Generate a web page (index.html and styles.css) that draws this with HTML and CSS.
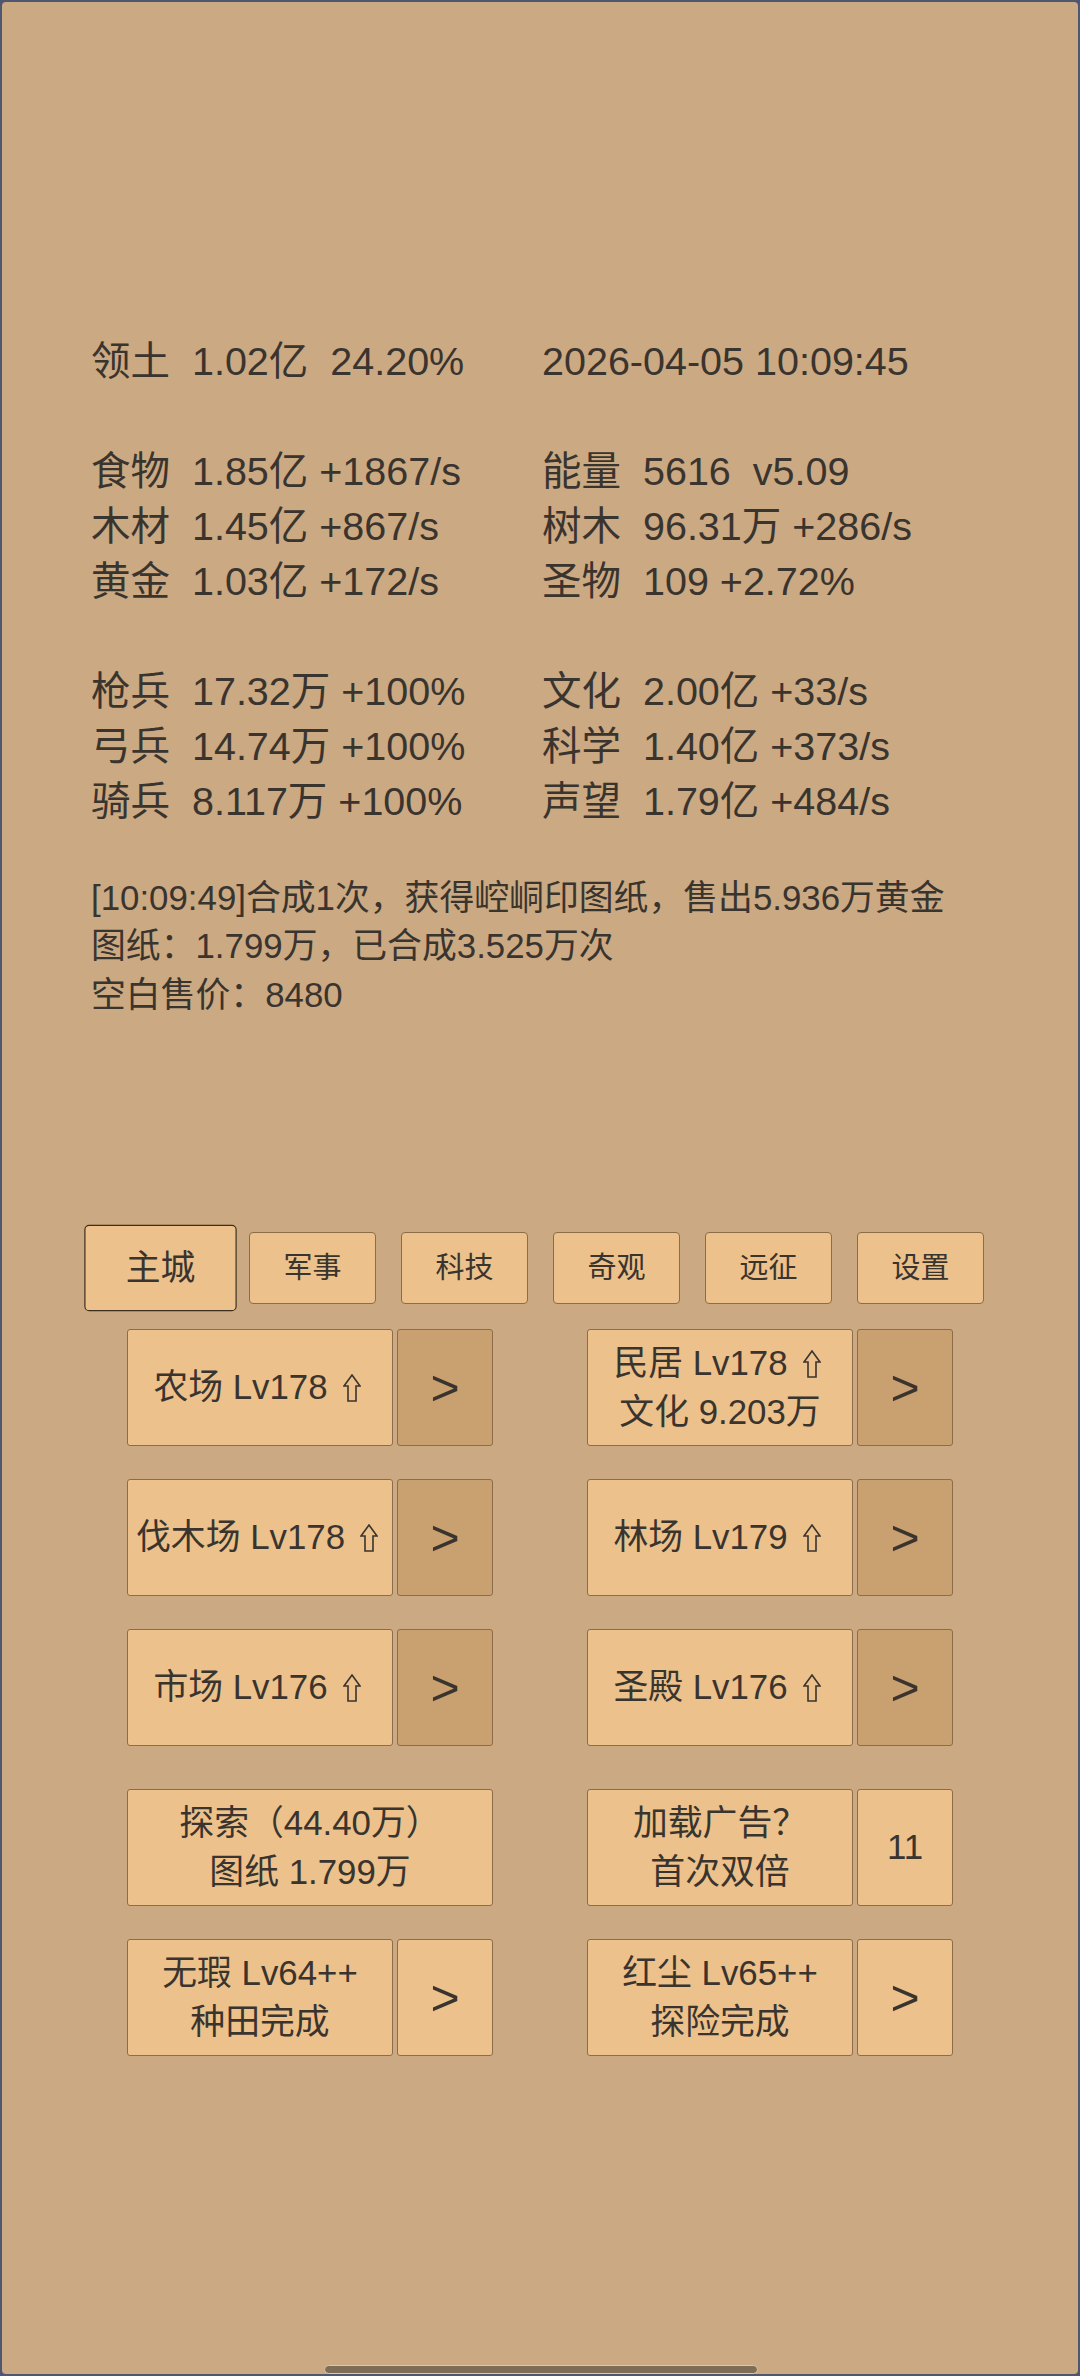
FILE: index.html
```html
<!DOCTYPE html>
<html lang="zh-CN">
<head>
<meta charset="utf-8">
<title>主城</title>
<link rel="stylesheet" href="styles.css">
</head>
<body>
<div class="screen">
  <section class="stats">
    <div class="group">
      <div class="cell">领土  1.02亿  24.20%</div>
      <div class="cell">2026-04-05 10:09:45</div>
    </div>
    <div class="group">
      <div class="cell">食物  1.85亿 +1867/s</div>
      <div class="cell">能量  5616  v5.09</div>
      <div class="cell">木材  1.45亿 +867/s</div>
      <div class="cell">树木  96.31万 +286/s</div>
      <div class="cell">黄金  1.03亿 +172/s</div>
      <div class="cell">圣物  109 +2.72%</div>
    </div>
    <div class="group">
      <div class="cell">枪兵  17.32万 +100%</div>
      <div class="cell">文化  2.00亿 +33/s</div>
      <div class="cell">弓兵  14.74万 +100%</div>
      <div class="cell">科学  1.40亿 +373/s</div>
      <div class="cell">骑兵  8.117万 +100%</div>
      <div class="cell">声望  1.79亿 +484/s</div>
    </div>
  </section>

  <section class="log">
    <p>[10:09:49]合成1次，获得崆峒印图纸，售出5.936万黄金</p>
    <p>图纸：1.799万，已合成3.525万次</p>
    <p>空白售价：8480</p>
  </section>

  <nav class="tabs">
    <div class="tab active">主城</div>
    <div class="tab">军事</div>
    <div class="tab">科技</div>
    <div class="tab">奇观</div>
    <div class="tab">远征</div>
    <div class="tab">设置</div>
  </nav>

  <section class="buildings">
    <div class="brow">
      <div class="bgroup">
        <div class="btn main"><span class="line">农场 Lv178<svg class="up" viewBox="0 0 18 28" aria-label="⇧"><path d="M9 1 L17 12 L13 12 L13 27 L5 27 L5 12 L1 12 Z"/></svg></span></div>
        <div class="btn more dark">&gt;</div>
      </div>
      <div class="bgroup">
        <div class="btn main"><span class="line">民居 Lv178<svg class="up" viewBox="0 0 18 28" aria-label="⇧"><path d="M9 1 L17 12 L13 12 L13 27 L5 27 L5 12 L1 12 Z"/></svg></span><span class="line">文化 9.203万</span></div>
        <div class="btn more dark">&gt;</div>
      </div>
    </div>
    <div class="brow">
      <div class="bgroup">
        <div class="btn main"><span class="line">伐木场 Lv178<svg class="up" viewBox="0 0 18 28" aria-label="⇧"><path d="M9 1 L17 12 L13 12 L13 27 L5 27 L5 12 L1 12 Z"/></svg></span></div>
        <div class="btn more dark">&gt;</div>
      </div>
      <div class="bgroup">
        <div class="btn main"><span class="line">林场 Lv179<svg class="up" viewBox="0 0 18 28" aria-label="⇧"><path d="M9 1 L17 12 L13 12 L13 27 L5 27 L5 12 L1 12 Z"/></svg></span></div>
        <div class="btn more dark">&gt;</div>
      </div>
    </div>
    <div class="brow">
      <div class="bgroup">
        <div class="btn main"><span class="line">市场 Lv176<svg class="up" viewBox="0 0 18 28" aria-label="⇧"><path d="M9 1 L17 12 L13 12 L13 27 L5 27 L5 12 L1 12 Z"/></svg></span></div>
        <div class="btn more dark">&gt;</div>
      </div>
      <div class="bgroup">
        <div class="btn main"><span class="line">圣殿 Lv176<svg class="up" viewBox="0 0 18 28" aria-label="⇧"><path d="M9 1 L17 12 L13 12 L13 27 L5 27 L5 12 L1 12 Z"/></svg></span></div>
        <div class="btn more dark">&gt;</div>
      </div>
    </div>
    <div class="brow spaced">
      <div class="bgroup">
        <div class="btn wide"><span class="line">探索（44.40万）</span><span class="line">图纸 1.799万</span></div>
      </div>
      <div class="bgroup">
        <div class="btn main"><span class="line">加载广告？</span><span class="line">首次双倍</span></div>
        <div class="btn more count">11</div>
      </div>
    </div>
    <div class="brow">
      <div class="bgroup">
        <div class="btn main"><span class="line">无瑕 Lv64++</span><span class="line">种田完成</span></div>
        <div class="btn more">&gt;</div>
      </div>
      <div class="bgroup">
        <div class="btn main"><span class="line">红尘 Lv65++</span><span class="line">探险完成</span></div>
        <div class="btn more">&gt;</div>
      </div>
    </div>
  </section>

  <div class="home-bar"></div>
</div>
</body>
</html>
```

FILE: styles.css
```css
* {
  box-sizing: border-box;
}

html, body {
  margin: 0;
  padding: 0;
  background: #4f5672;
}

.screen {
  position: relative;
  width: 1080px;
  height: 2376px;
  overflow: hidden;
  background: #cba982;
  border: 2px solid #4f5672;
  border-radius: 6px;
  color: #3a342f;
  font-family: "Liberation Sans", "Noto Sans CJK SC", sans-serif;
}

/* ---------- stats ---------- */
.stats {
  padding-top: 332px;
  padding-left: 89px;
  font-size: 39.5px;
}

.group {
  display: grid;
  grid-template-columns: 451px 1fr;
  grid-auto-rows: 55px;
}

.group + .group {
  margin-top: 55px;
}

.cell {
  height: 55px;
  line-height: 55px;
  white-space: pre;
}

/* ---------- log ---------- */
.log {
  margin-top: 45px;
  padding-left: 89px;
  font-size: 34.85px;
}

.log p {
  margin: 0;
  height: 48.4px;
  line-height: 48.4px;
  white-space: nowrap;
}

/* ---------- tabs ---------- */
.tabs {
  margin-top: 213px;
  display: flex;
  justify-content: center;
  gap: 25px;
  padding-left: 1px;
}

.tab {
  width: 127px;
  height: 72px;
  display: flex;
  align-items: center;
  justify-content: center;
  background: #ecc18b;
  border: 1px solid #8d6c49;
  border-radius: 4px;
  font-size: 29px;
  line-height: 1;
}

.tab.active {
  transform: scale(1.2);
  border-color: #3d2f20;
}

/* ---------- building buttons ---------- */
.buildings {
  margin-top: 25px;
}

.brow {
  display: flex;
  justify-content: center;
  gap: 94px;
  height: 117px;
}

.brow + .brow {
  margin-top: 33px;
}

.brow.spaced {
  margin-top: 43px;
}

.bgroup {
  display: flex;
  gap: 4px;
  width: 366px;
}

.btn {
  height: 117px;
  display: flex;
  flex-direction: column;
  align-items: center;
  justify-content: center;
  background: #ecc18b;
  border: 1px solid #8d6c49;
  border-radius: 3px;
  font-size: 34.85px;
  line-height: 48.4px;
  text-align: center;
}

.line {
  display: block;
  white-space: pre;
}

.btn.main {
  width: 266px;
}

.btn.wide {
  width: 366px;
}

.btn.more {
  width: 96px;
  font-size: 50px;
  line-height: 1;
}

.btn.more.count {
  font-size: 34.85px;
}

.btn.dark {
  background: #c9a06f;
}

.up {
  display: inline-block;
  width: 18px;
  height: 28px;
  margin-left: 15px;
  margin-right: 6px;
  vertical-align: -3px;
  fill: none;
  stroke: #3a342f;
  stroke-width: 1.6;
  stroke-linejoin: miter;
}

/* ---------- system home indicator ---------- */
.home-bar {
  position: absolute;
  left: 322px;
  top: 2363px;
  width: 434px;
  height: 9px;
  background: #7e6c56;
  border: 1px solid #dccaa6;
  border-radius: 5px;
}
```
